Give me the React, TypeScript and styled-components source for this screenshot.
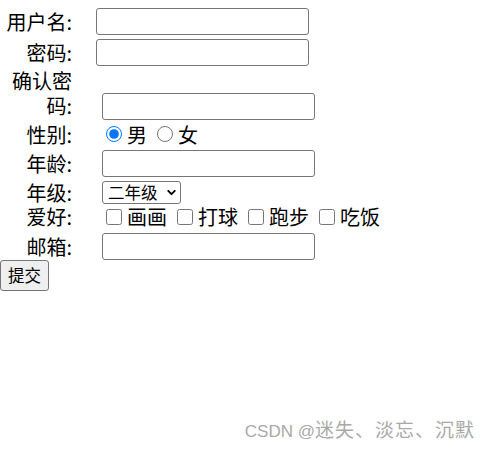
import React from "react";
import styled, { createGlobalStyle } from "styled-components";
import { ChevronDown } from "lucide-react";

const GlobalStyle = createGlobalStyle`
  html, body {
    margin: 0;
    padding: 0;
    background: #ffffff;
  }
  body {
    font-family: "Noto Sans CJK SC", "Microsoft YaHei", sans-serif;
    color: #000000;
  }
`;

const Page = styled.div`
  position: relative;
  width: 491px;
  height: 451px;
  overflow: hidden;
`;

const Form = styled.form`
  display: flex;
  flex-direction: column;
  align-items: flex-start;
  padding-top: 6px;
`;

const Row = styled.div<{ $h?: number; $mt?: number; $end?: boolean; $gap?: number }>`
  display: flex;
  align-items: ${(p) => (p.$end ? "flex-end" : "center")};
  height: ${(p) => (p.$h ? `${p.$h}px` : "auto")};
  margin-top: ${(p) => p.$mt || 0}px;
  gap: ${(p) => p.$gap ?? 30}px;
`;

const Label = styled.label<{ $wrap?: boolean }>`
  width: 72px;
  flex-shrink: 0;
  text-align: right;
  font-size: 20px;
  line-height: ${(p) => (p.$wrap ? "25px" : "21px")};
  padding-bottom: ${(p) => (p.$wrap ? "2px" : "0")};
  white-space: ${(p) => (p.$wrap ? "normal" : "nowrap")};
`;

const WrapLabel = styled(Label)`
  width: 60px;
  margin-left: 12px;
`;

const TextInput = styled.input`
  box-sizing: border-box;
  width: 213px;
  height: 27px;
  margin: 0;
  padding: 1px 3px;
  border: 1px solid #767676;
  border-radius: 3px;
  background: #ffffff;
  font-size: 16.5px;
  font-family: "Liberation Sans", Arial, sans-serif;
`;

const SelectWrap = styled.div`
  position: relative;
  display: inline-flex;
  width: 79px;
  height: 23px;
`;

const Select = styled.select`
  box-sizing: border-box;
  appearance: none;
  width: 100%;
  height: 100%;
  margin: 0;
  padding: 0 18px 0 5px;
  border: 1px solid #767676;
  border-radius: 3px;
  background: #ffffff;
  color: #000000;
  font-size: 16.5px;
  line-height: 21px;
  font-family: "Noto Sans CJK SC", sans-serif;
  outline: none;
`;

const Chevron = styled(ChevronDown)`
  position: absolute;
  right: 3px;
  top: 5px;
  width: 13px;
  height: 13px;
  color: #000000;
  pointer-events: none;
`;

const Options = styled.div`
  display: flex;
  align-items: center;
`;

const Option = styled.label`
  display: inline-flex;
  align-items: center;
  margin-right: 6px;
  font-size: 20px;
  line-height: 21px;
`;

const Control = styled.input`
  width: 16px;
  height: 16px;
  margin: 0 5px 0 4px;
`;

const Submit = styled.button`
  box-sizing: border-box;
  height: 31px;
  margin: 0;
  padding: 0 7px;
  border: 1px solid #767676;
  border-radius: 3px;
  background: #efefef;
  color: #000000;
  font-size: 16.5px;
  font-family: "Noto Sans CJK SC", sans-serif;
  line-height: 29px;
`;

const Watermark = styled.div`
  position: absolute;
  right: 16px;
  bottom: 6px;
  color: #a9a9a9;
  font-family: "Liberation Sans", Arial, sans-serif;
  font-size: 17px;
  line-height: 26px;
  white-space: nowrap;
`;

const WatermarkName = styled.span`
  font-family: "Noto Sans CJK SC", sans-serif;
  font-size: 19px;
  letter-spacing: 1px;
`;

const hobbies = ["画画", "打球", "跑步", "吃饭"];

export default function App() {
  return (
    <Page>
      <GlobalStyle />
      <Form onSubmit={(e) => e.preventDefault()}>
        <Row $h={31} $gap={24}>
          <Label>用户名:</Label>
          <TextInput type="text" />
        </Row>
        <Row $h={31} $gap={24}>
          <Label>密码:</Label>
          <TextInput type="password" />
        </Row>
        <Row $end>
          <WrapLabel $wrap>确认密码:</WrapLabel>
          <TextInput type="password" />
        </Row>
        <Row $h={28}>
          <Label>性别:</Label>
          <Options>
            <Option>
              <Control type="radio" name="sex" defaultChecked />男
            </Option>
            <Option>
              <Control type="radio" name="sex" />女
            </Option>
          </Options>
        </Row>
        <Row $h={30}>
          <Label>年龄:</Label>
          <TextInput type="text" />
        </Row>
        <Row $h={28}>
          <Label>年级:</Label>
          <SelectWrap>
            <Select defaultValue="2">
              <option value="1">一年级</option>
              <option value="2">二年级</option>
              <option value="3">三年级</option>
            </Select>
            <Chevron strokeWidth={3.5} />
          </SelectWrap>
        </Row>
        <Row $h={21}>
          <Label>爱好:</Label>
          <Options>
            {hobbies.map((h) => (
              <Option key={h}>
                <Control type="checkbox" />
                {h}
              </Option>
            ))}
          </Options>
        </Row>
        <Row $h={28} $mt={5}>
          <Label>邮箱:</Label>
          <TextInput type="email" />
        </Row>
        <Submit type="submit">提交</Submit>
      </Form>
      <Watermark>
        CSDN @<WatermarkName>迷失、淡忘、沉默</WatermarkName>
      </Watermark>
    </Page>
  );
}
